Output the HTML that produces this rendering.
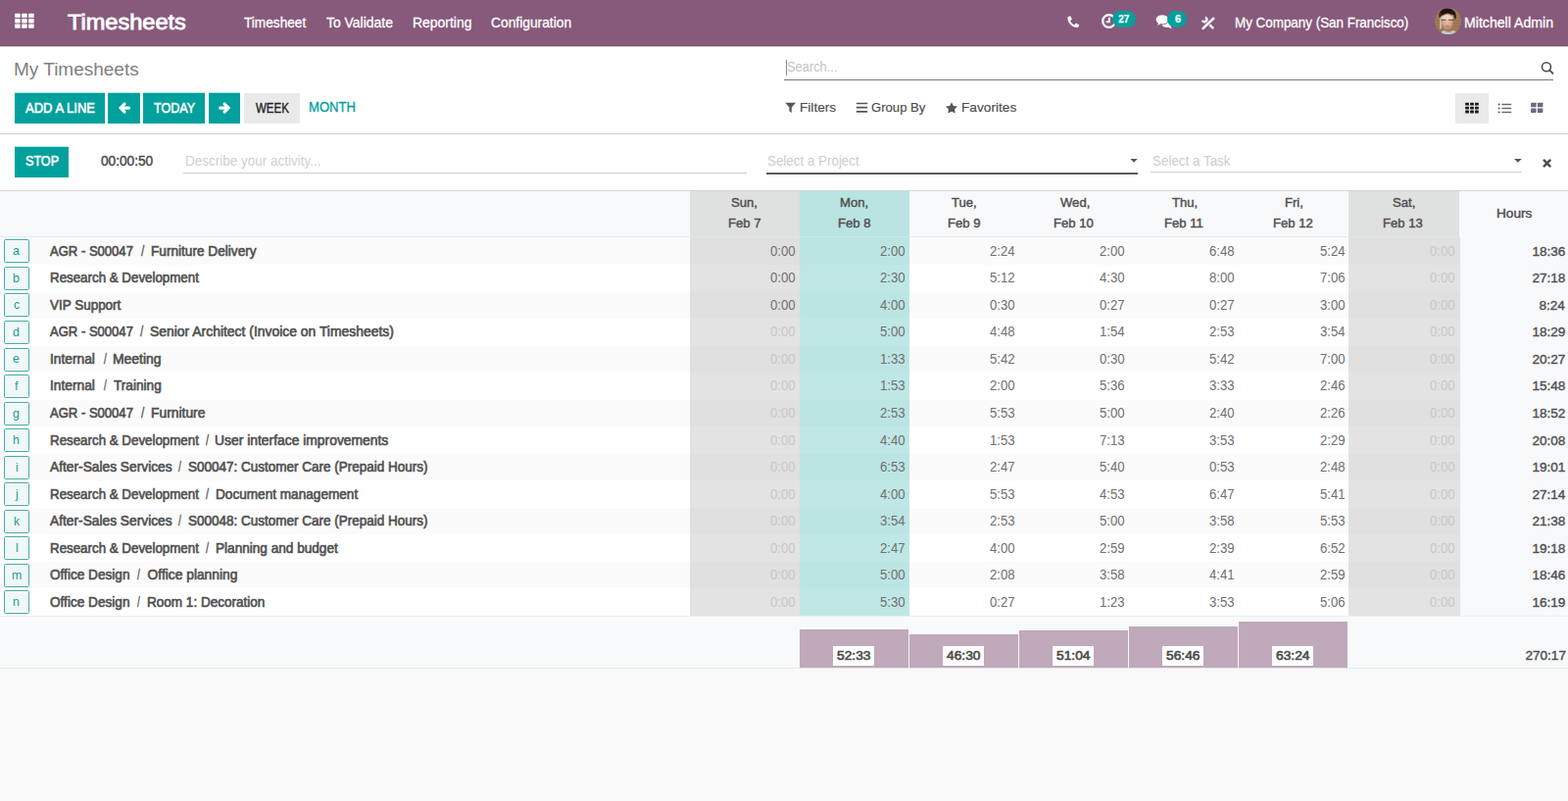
<!DOCTYPE html>
<html lang="en">
<head>
<meta charset="utf-8">
<title>Odoo - My Timesheets</title>
<style>
*{box-sizing:border-box;margin:0;padding:0}
html,body{width:1600px;height:817px;overflow:hidden;background:#f9f9f9}
body{font-family:"Liberation Sans",sans-serif;font-size:13px;color:#4c4c4c;position:relative}
#nav,#cp,#tm,#grid{position:absolute;left:0;width:1600px}
#nav div,#cp div,#tm div,#grid div,#nav svg,#cp svg,#tm svg,#grid svg,.t{position:absolute}
.t{white-space:pre;line-height:40px;height:40px;transform-origin:0 0}
#nav{top:0;height:47px;background:#875a7b;color:#fff;box-shadow:0 1px 0 #cbcbcb;z-index:2}
#nav:after{content:"";position:absolute;left:0;right:0;bottom:0;height:1px;background:#7a4670}
#cp{top:47px;height:90px;background:#fff}
#cp:after{content:"";position:absolute;left:0;right:0;bottom:0;height:1px;background:#cfcfcf}
#tm{top:137px;height:58px;background:#fff}
#tm:after{content:"";position:absolute;left:0;right:0;bottom:0;height:1px;background:#d6d6d6}
#grid{top:195px;height:487px;background:#fff}
.bp{background:#00a09d;box-shadow:0 -1px 0 rgba(0,160,157,.3)}
.w{color:#fff}
.kb{border:1px solid #45aaa7;border-radius:1.5px;background:#f1f8f8;box-shadow:inset 0 0 0 1px #fdfefe}

</style>
</head>
<body>
<header id="nav">
<svg style="left:15px;top:13px" width="21" height="17" viewBox="15 13 21 17"><g fill="#fff"><rect x="15.1" y="13.7" width="5.6" height="4.3" rx="0.7"/><rect x="15.1" y="19.1" width="5.6" height="4.3" rx="0.7"/><rect x="15.1" y="24.5" width="5.6" height="4.3" rx="0.7"/><rect x="22.1" y="13.7" width="5.6" height="4.3" rx="0.7"/><rect x="22.1" y="19.1" width="5.6" height="4.3" rx="0.7"/><rect x="22.1" y="24.5" width="5.6" height="4.3" rx="0.7"/><rect x="29.1" y="13.7" width="5.6" height="4.3" rx="0.7"/><rect x="29.1" y="19.1" width="5.6" height="4.3" rx="0.7"/><rect x="29.1" y="24.5" width="5.6" height="4.3" rx="0.7"/></g></svg>
<svg style="left:1089px;top:16px" width="13" height="13" viewBox="1089 16 13 13"><path transform="translate(1089.3 16.2)" fill="#fff" d="M2.2 .2L.5 1C.1 1.3 0 1.8 .1 2.3C.6 7.6 4.4 11.4 9.7 11.9C10.2 12 10.7 11.9 11 11.5L11.8 9.8C12 9.4 11.8 9 11.4 8.8L9 7.6C8.6 7.4 8.2 7.5 8 7.8L7.200 9.300C5.1 8.500 3.500 6.900 2.700 4.800L4.2 4C4.5 3.8 4.6 3.4 4.4 3L3.2 .6C3 .2 2.6 0 2.2 .2Z"/></svg>
<svg style="left:1123px;top:13px" width="18" height="18" viewBox="1123 13 18 18"><circle cx="1131.6" cy="21.5" r="6.400" fill="none" stroke="#fff" stroke-width="2.300"/><path d="M1131.900 17.700V22.300H1128.700" fill="none" stroke="#fff" stroke-width="1.900"/></svg>
<div style="left:1135px;top:11px;width:24px;height:17px;background:#00a09d;border-radius:9px"></div>
<svg style="left:1178px;top:14px" width="20" height="16" viewBox="1178 14 20 16"><path fill="#fff" d="M1190.6 20.800c3 0 5.300 1.600 5.300 3.600c0 1-.6 1.900-1.500 2.500c.3.800.9 1.500 1.700 2.100c-1.500 0-2.800-.5-3.700-1.300c-.6.100-1.200.2-1.800.2c-3 0-5.300-1.600-5.300-3.600s2.300-3.500 5.300-3.500z"/><path fill="#fff" stroke="#875a7b" stroke-width="1" d="M1186 14.900c3.800 0 6.800 2.200 6.800 5s-3 5-6.800 5c-.7 0-1.300-.1-1.900-.2c-1.100 1-2.600 1.600-4.300 1.700c.9-.8 1.500-1.700 1.700-2.700c-1.400-.9-2.300-2.200-2.300-3.800c0-2.800 3-5 6.800-5z"/></svg>
<div style="left:1191px;top:10.5px;width:20px;height:17.5px;background:#00a09d;border-radius:9px"></div>
<svg style="left:1225px;top:16px" width="16" height="15" viewBox="1225 16 16 15"><g fill="none" stroke="#fff" stroke-linecap="round"><path d="M1230.400 21.300L1237.500 28.300" stroke-width="2.500"/><path d="M1229.900 17.700A2.400 2.400 0 1 1 1226.900 20.700" stroke-width="2.200" stroke-linecap="butt"/><path d="M1238.200 18.800L1227.900 28.600" stroke="#875a7b" stroke-width="4" stroke-linecap="butt"/><path d="M1238 19L1228.300 28.200" stroke-width="2.600" stroke-linecap="square"/><path d="M1229.500 27.100L1227.200 29.300" stroke-width="1.600"/></g></svg>
<svg style="left:1464px;top:8px" width="28" height="28" viewBox="1464 8 28 28"><defs><clipPath id="avc"><circle cx="1477.6" cy="21.6" r="13.5"/></clipPath><radialGradient id="avf" cx="50%" cy="45%" r="55%"><stop offset="0" stop-color="#e6c3a9"/><stop offset=".7" stop-color="#d2a483"/><stop offset="1" stop-color="#b98a68" stop-opacity=".6"/></radialGradient><linearGradient id="avh" x1="0" y1="0" x2="0" y2="1"><stop offset="0" stop-color="#171010"/><stop offset=".75" stop-color="#2a1b18"/><stop offset="1" stop-color="#2a1b18" stop-opacity="0"/></linearGradient></defs><g clip-path="url(#avc)"><rect x="1460" y="4" width="36" height="36" fill="#a67e59"/><rect x="1460" y="11.5" width="36" height="1" fill="#80603f" opacity=".55"/><rect x="1460" y="14.5" width="36" height="1" fill="#80603f" opacity=".55"/><rect x="1460" y="17.5" width="36" height="1" fill="#80603f" opacity=".55"/><rect x="1460" y="20.5" width="36" height="1" fill="#80603f" opacity=".55"/><rect x="1460" y="23.5" width="36" height="1" fill="#80603f" opacity=".55"/><rect x="1460" y="26.5" width="36" height="1" fill="#80603f" opacity=".55"/><rect x="1460" y="29.5" width="36" height="1" fill="#80603f" opacity=".55"/><rect x="1460" y="32.5" width="36" height="1" fill="#80603f" opacity=".55"/><path d="M1468.300 16.500c-.1-5 3.400-8 8.600-8s8.800 2.900 9 8.500l-.9 4.500l-1.500-6.300l-6.300-1.700l-6.600 2.200l-1.100 3.500z" fill="url(#avh)"/><ellipse cx="1476.800" cy="22.400" rx="6" ry="8.400" fill="url(#avf)"/><rect x="1469.200" y="17.500" width="1.800" height="12" fill="#d9dadb" opacity=".7"/><path d="M1470.600 17.200q6-4.300 12.200 0l-.6 2.600h-11z" fill="#efdcd2" opacity=".85"/><path d="M1470.300 20.300h5.200M1478 20.300h5.200" stroke="#5a3a32" stroke-width="1.200" opacity=".7" fill="none"/><ellipse cx="1477" cy="27.200" rx="2.600" ry="1.400" fill="#c27c82" opacity=".8"/><path d="M1469 37c.8-4.300 3-5.600 5-6.200c2 2.600 6.500 2.600 8.500 0c2.500.8 4.500 2.400 5.300 6.200z" fill="#c5ced9" opacity=".9"/><path d="M1467.500 12.800l3.300.6l-1.800 3.400z" fill="#8a2a20" opacity=".8"/></g></svg>
<span class="t" style="left:68.5px;top:3.0px;font-size:21.5px;-webkit-text-stroke:0.8px;transform:scaleX(1.0955);">Timesheets</span>
<span class="t" style="left:248.75px;top:2.5px;font-size:15px;-webkit-text-stroke:0.3px;transform:scaleX(0.9107);">Timesheet</span>
<span class="t" style="left:333.1px;top:2.5px;font-size:15px;-webkit-text-stroke:0.3px;transform:scaleX(0.9288);">To Validate</span>
<span class="t" style="left:420.57px;top:2.5px;font-size:15px;-webkit-text-stroke:0.3px;transform:scaleX(0.9286);">Reporting</span>
<span class="t" style="left:500.58px;top:2.5px;font-size:15px;-webkit-text-stroke:0.3px;transform:scaleX(0.9205);">Configuration</span>
<span class="t" style="left:1259.71px;top:2.5px;font-size:15px;-webkit-text-stroke:0.3px;transform:scaleX(0.8934);">My Company (San Francisco)</span>
<span class="t" style="left:1494.06px;top:2.5px;font-size:15px;-webkit-text-stroke:0.3px;transform:scaleX(0.9421);">Mitchell Admin</span>
<span class="t" style="left:1141.3px;top:0.1px;font-size:10px;font-weight:bold;-webkit-text-stroke:0.25px;">27</span>
<span class="t" style="left:1198.6px;top:0.1px;font-size:10px;font-weight:bold;-webkit-text-stroke:0.25px;transform:scaleX(1.1);">6</span>
</header>
<section id="cp">
<div class="bp" style="left:15px;top:48px;width:92px;height:31px;"></div>
<div class="bp" style="left:110px;top:48px;width:33px;height:31px;"></div>
<svg style="left:119.7px;top:56.2px" width="15" height="14" viewBox="-1 -1 15 14"><path d="M6.1 2L2.1 6.1L6.1 10.200M3 6.1H10.600" fill="none" stroke="#fff" stroke-width="3.100" stroke-linejoin="miter" stroke-linecap="round"/></svg>
<div class="bp" style="left:146px;top:48px;width:63px;height:31px;"></div>
<div class="bp" style="left:213px;top:48px;width:32px;height:31px;"></div>
<svg style="left:222.1px;top:56.2px" width="15" height="14" viewBox="-1 -1 15 14"><path d="M6.1 2L2.1 6.1L6.1 10.200M3 6.1H10.600" transform="translate(12.2 0) scale(-1 1)" fill="none" stroke="#fff" stroke-width="3.100" stroke-linejoin="miter" stroke-linecap="round"/></svg>
<div style="left:249px;top:48px;width:56.5px;height:31px;background:#eaeaea;"></div>
<div style="left:800px;top:34px;width:785px;height:1px;background:#7a7a7a"></div>
<div style="left:802px;top:14px;width:1px;height:16px;background:#8c8c8c"></div>
<svg style="left:1571px;top:14px" width="16" height="16" viewBox="1571 61 16 16"><circle cx="1578" cy="68.200" r="4.500" fill="none" stroke="#4c4c4c" stroke-width="1.600"/><path d="M1581.300 71.600L1584.500 74.800" stroke="#4c4c4c" stroke-width="1.900" stroke-linecap="round"/></svg>
<svg style="left:800px;top:56px" width="13" height="13" viewBox="800 103 13 13"><path fill="#555" d="M801.200 104.700h10.800l-4.200 4.700v5.600l-2.400-1.800v-3.800z"/></svg>
<svg style="left:873px;top:56px" width="13" height="13" viewBox="873 103 13 13"><path stroke="#555" stroke-width="1.700" d="M873.800 105.500h11.400M873.800 109.700h11.400M873.800 113.800h11.400"/></svg>
<svg style="left:964px;top:56px" width="14" height="13" viewBox="964 103 14 13"><path fill="#555" d="M971 104.200l1.850 3.750l4.150.6l-3 2.920l.7 4.130l-3.700-1.950l-3.700 1.950l.7-4.130l-3-2.920l4.150-.6z"/></svg>
<div style="left:1485px;top:48px;width:34px;height:31px;background:#eaeaea"></div>
<svg style="left:1495px;top:57px" width="15" height="12" viewBox="1495 104 15 12"><g fill="#1b1b1b"><rect x="1495.2" y="104.8" width="3.800" height="2.800" rx=".4"/><rect x="1495.2" y="108.7" width="3.800" height="2.800" rx=".4"/><rect x="1495.2" y="112.6" width="3.800" height="2.800" rx=".4"/><rect x="1500.1" y="104.8" width="3.800" height="2.800" rx=".4"/><rect x="1500.1" y="108.7" width="3.800" height="2.800" rx=".4"/><rect x="1500.1" y="112.6" width="3.800" height="2.800" rx=".4"/><rect x="1505" y="104.8" width="3.800" height="2.800" rx=".4"/><rect x="1505" y="108.7" width="3.800" height="2.800" rx=".4"/><rect x="1505" y="112.6" width="3.800" height="2.800" rx=".4"/></g></svg>
<svg style="left:1528px;top:57px" width="15" height="12" viewBox="1528 104 15 12"><g fill="#5f6775"><circle cx="1529.600" cy="106.5" r="1.100"/><rect x="1532.400" y="105.8" width="9.800" height="1.400"/><circle cx="1529.600" cy="110.5" r="1.100"/><rect x="1532.400" y="109.8" width="9.800" height="1.400"/><circle cx="1529.600" cy="114.5" r="1.100"/><rect x="1532.400" y="113.8" width="9.800" height="1.400"/></g></svg>
<svg style="left:1561px;top:57px" width="14" height="12" viewBox="1561 104 14 12"><g fill="#666e7c"><rect x="1562.1" y="104.7" width="5.500" height="4.600" rx=".5"/><rect x="1562.1" y="110.5" width="5.500" height="4.600" rx=".5"/><rect x="1568.9" y="104.7" width="5.500" height="4.600" rx=".5"/><rect x="1568.9" y="110.5" width="5.500" height="4.600" rx=".5"/></g></svg>
<span class="t" style="left:14.12px;top:3.9px;font-size:19.2px;color:#808080;transform:scaleX(0.9898);">My Timesheets</span>
<span class="t" style="left:25.75px;top:42.6px;font-size:14px;color:#fff;-webkit-text-stroke:0.55px;transform:scaleX(0.9309);">ADD A LINE</span>
<span class="t" style="left:157.0px;top:42.6px;font-size:14px;color:#fff;-webkit-text-stroke:0.55px;transform:scaleX(0.8989);">TODAY</span>
<span class="t" style="left:260.6px;top:42.6px;font-size:14px;color:#212529;-webkit-text-stroke:0.4px;transform:scaleX(0.822);">WEEK</span>
<span class="t" style="left:315.17px;top:42.2px;font-size:14px;color:#00a09d;-webkit-text-stroke:0.3px;transform:scaleX(0.934);">MONTH</span>
<span class="t" style="left:802.98px;top:0.7px;font-size:14px;color:#c4c4c4;transform:scaleX(0.9194);">Search...</span>
<span class="t" style="left:815.6px;top:43.3px;font-size:13.6px;-webkit-text-stroke:0.15px;transform:scaleX(1.0028);">Filters</span>
<span class="t" style="left:889.24px;top:43.3px;font-size:13.6px;-webkit-text-stroke:0.15px;transform:scaleX(0.9643);">Group By</span>
<span class="t" style="left:981.49px;top:43.3px;font-size:13.6px;-webkit-text-stroke:0.15px;transform:scaleX(1.0056);">Favorites</span>
</section>
<section id="tm">
<div class="bp" style="left:15px;top:13px;width:55px;height:31px;"></div>
<div style="left:187px;top:39px;width:575.3px;height:1px;background:#ccc"></div>
<div style="left:782px;top:39px;width:379px;height:2px;background:#5c5c5c"></div>
<svg style="left:1153px;top:24px" width="9" height="6" viewBox="1153 161 9 6"><path fill="#555" d="M1153.400 162h7.400l-3.700 3.800z"/></svg>
<div style="left:1173.5px;top:38px;width:379.5px;height:1px;background:#d2d2d2"></div>
<svg style="left:1545px;top:24px" width="9" height="6" viewBox="1545 161 9 6"><path fill="#555" d="M1545 162h7.800l-3.900 3.800z"/></svg>
<svg style="left:1573px;top:24px" width="11" height="11" viewBox="1573 161 11 11"><path d="M1575 162.900l7.200 7.200M1582.200 162.900l-7.200 7.200" stroke="#4c4c4c" stroke-width="2.500"/></svg>
<span class="t" style="left:25.6px;top:7.4px;font-size:14px;color:#fff;-webkit-text-stroke:0.55px;transform:scaleX(0.8987);">STOP</span>
<span class="t" style="left:102.5px;top:7.2px;font-size:14px;-webkit-text-stroke:0.45px;transform:scaleX(0.9759);">00:00:50</span>
<span class="t" style="left:189.39px;top:7.2px;font-size:14px;color:#d0d0d0;transform:scaleX(0.9644);">Describe your activity...</span>
<span class="t" style="left:783.39px;top:7.0px;font-size:14px;color:#cdcdcd;transform:scaleX(0.9557);">Select a Project</span>
<span class="t" style="left:1175.89px;top:7.0px;font-size:14px;color:#cdcdcd;transform:scaleX(0.9579);">Select a Task</span>
</section>
<main id="grid">
<div style="left:0px;top:0px;width:1600px;height:46px;background:#f8f9fa"></div>
<div style="left:0px;top:47px;width:1600px;height:28px;background:#fbfbfb"></div>
<div style="left:0px;top:75px;width:1600px;height:27px;background:#fff"></div>
<div style="left:0px;top:102px;width:1600px;height:28px;background:#fbfbfb"></div>
<div style="left:0px;top:130px;width:1600px;height:28px;background:#fff"></div>
<div style="left:0px;top:158px;width:1600px;height:27px;background:#fbfbfb"></div>
<div style="left:0px;top:185px;width:1600px;height:28px;background:#fff"></div>
<div style="left:0px;top:213px;width:1600px;height:27px;background:#fbfbfb"></div>
<div style="left:0px;top:240px;width:1600px;height:28px;background:#fff"></div>
<div style="left:0px;top:268px;width:1600px;height:27px;background:#fbfbfb"></div>
<div style="left:0px;top:295px;width:1600px;height:28px;background:#fff"></div>
<div style="left:0px;top:323px;width:1600px;height:27px;background:#fbfbfb"></div>
<div style="left:0px;top:350px;width:1600px;height:28px;background:#fff"></div>
<div style="left:0px;top:378px;width:1600px;height:27px;background:#fbfbfb"></div>
<div style="left:0px;top:405px;width:1600px;height:28px;background:#fff"></div>
<div style="left:0px;top:46px;width:1600px;height:1px;background:#e8ebee"></div>
<div style="left:704px;top:0px;width:112px;height:47px;background:#dfe0e0;border-bottom:1px solid #e4e5e5"></div>
<div style="left:816px;top:0px;width:112px;height:47px;background:#bae4e2;border-bottom:1px solid #c3e8e6"></div>
<div style="left:1376px;top:0px;width:113px;height:47px;background:#dfe0e0;border-bottom:1px solid #e4e5e5"></div>
<div style="left:704px;top:47px;width:112px;height:28px;background:#e0e0e0"></div>
<div style="left:816px;top:47px;width:112px;height:28px;background:#bbe5e3"></div>
<div style="left:1376px;top:47px;width:114px;height:28px;background:#e0e0e0"></div>
<div style="left:704px;top:75px;width:112px;height:27px;background:#e3e3e3"></div>
<div style="left:816px;top:75px;width:112px;height:27px;background:#bee7e5"></div>
<div style="left:1376px;top:75px;width:114px;height:27px;background:#e3e3e3"></div>
<div style="left:704px;top:102px;width:112px;height:28px;background:#e0e0e0"></div>
<div style="left:816px;top:102px;width:112px;height:28px;background:#bbe5e3"></div>
<div style="left:1376px;top:102px;width:114px;height:28px;background:#e0e0e0"></div>
<div style="left:704px;top:130px;width:112px;height:28px;background:#e3e3e3"></div>
<div style="left:816px;top:130px;width:112px;height:28px;background:#bee7e5"></div>
<div style="left:1376px;top:130px;width:114px;height:28px;background:#e3e3e3"></div>
<div style="left:704px;top:158px;width:112px;height:27px;background:#e0e0e0"></div>
<div style="left:816px;top:158px;width:112px;height:27px;background:#bbe5e3"></div>
<div style="left:1376px;top:158px;width:114px;height:27px;background:#e0e0e0"></div>
<div style="left:704px;top:185px;width:112px;height:28px;background:#e3e3e3"></div>
<div style="left:816px;top:185px;width:112px;height:28px;background:#bee7e5"></div>
<div style="left:1376px;top:185px;width:114px;height:28px;background:#e3e3e3"></div>
<div style="left:704px;top:213px;width:112px;height:27px;background:#e0e0e0"></div>
<div style="left:816px;top:213px;width:112px;height:27px;background:#bbe5e3"></div>
<div style="left:1376px;top:213px;width:114px;height:27px;background:#e0e0e0"></div>
<div style="left:704px;top:240px;width:112px;height:28px;background:#e3e3e3"></div>
<div style="left:816px;top:240px;width:112px;height:28px;background:#bee7e5"></div>
<div style="left:1376px;top:240px;width:114px;height:28px;background:#e3e3e3"></div>
<div style="left:704px;top:268px;width:112px;height:27px;background:#e0e0e0"></div>
<div style="left:816px;top:268px;width:112px;height:27px;background:#bbe5e3"></div>
<div style="left:1376px;top:268px;width:114px;height:27px;background:#e0e0e0"></div>
<div style="left:704px;top:295px;width:112px;height:28px;background:#e3e3e3"></div>
<div style="left:816px;top:295px;width:112px;height:28px;background:#bee7e5"></div>
<div style="left:1376px;top:295px;width:114px;height:28px;background:#e3e3e3"></div>
<div style="left:704px;top:323px;width:112px;height:27px;background:#e0e0e0"></div>
<div style="left:816px;top:323px;width:112px;height:27px;background:#bbe5e3"></div>
<div style="left:1376px;top:323px;width:114px;height:27px;background:#e0e0e0"></div>
<div style="left:704px;top:350px;width:112px;height:28px;background:#e3e3e3"></div>
<div style="left:816px;top:350px;width:112px;height:28px;background:#bee7e5"></div>
<div style="left:1376px;top:350px;width:114px;height:28px;background:#e3e3e3"></div>
<div style="left:704px;top:378px;width:112px;height:27px;background:#e0e0e0"></div>
<div style="left:816px;top:378px;width:112px;height:27px;background:#bbe5e3"></div>
<div style="left:1376px;top:378px;width:114px;height:27px;background:#e0e0e0"></div>
<div style="left:704px;top:405px;width:112px;height:28px;background:#e3e3e3"></div>
<div style="left:816px;top:405px;width:112px;height:28px;background:#bee7e5"></div>
<div style="left:1376px;top:405px;width:114px;height:28px;background:#e3e3e3"></div>
<div style="left:1490px;top:46px;width:110px;height:387px;background:#f8f9fa"></div>
<div style="left:0px;top:433px;width:1600px;height:1px;background:#eceef1"></div>
<div style="left:0px;top:434px;width:1600px;height:52px;background:#f8f9fa"></div>
<div style="left:0px;top:486px;width:1600px;height:1px;background:#e4e6e9"></div>
<div class="kb" style="left:4px;top:49px;width:26px;height:24px;"></div>
<div class="kb" style="left:4px;top:77px;width:26px;height:24px;"></div>
<div class="kb" style="left:4px;top:104px;width:26px;height:24px;"></div>
<div class="kb" style="left:4px;top:132px;width:26px;height:24px;"></div>
<div class="kb" style="left:4px;top:160px;width:26px;height:24px;"></div>
<div class="kb" style="left:4px;top:187px;width:26px;height:24px;"></div>
<div class="kb" style="left:4px;top:215px;width:26px;height:24px;"></div>
<div class="kb" style="left:4px;top:242px;width:26px;height:24px;"></div>
<div class="kb" style="left:4px;top:270px;width:26px;height:24px;"></div>
<div class="kb" style="left:4px;top:297px;width:26px;height:24px;"></div>
<div class="kb" style="left:4px;top:325px;width:26px;height:24px;"></div>
<div class="kb" style="left:4px;top:352px;width:26px;height:24px;"></div>
<div class="kb" style="left:4px;top:380px;width:26px;height:24px;"></div>
<div class="kb" style="left:4px;top:407px;width:26px;height:24px;"></div>
<div style="left:816px;top:447px;width:111px;height:39px;background:#bfa9ba"></div>
<div style="left:850.0px;top:464px;width:42px;height:20px;background:#fff"></div>
<div style="left:928px;top:452px;width:111px;height:34px;background:#bfa9ba"></div>
<div style="left:962.0px;top:464px;width:42px;height:20px;background:#fff"></div>
<div style="left:1040px;top:448px;width:111px;height:38px;background:#bfa9ba"></div>
<div style="left:1074.0px;top:464px;width:42px;height:20px;background:#fff"></div>
<div style="left:1152px;top:444px;width:111px;height:42px;background:#bfa9ba"></div>
<div style="left:1186.0px;top:464px;width:42px;height:20px;background:#fff"></div>
<div style="left:1264px;top:439px;width:111px;height:47px;background:#bfa9ba"></div>
<div style="left:1298.0px;top:464px;width:42px;height:20px;background:#fff"></div>
<span class="t" style="left:746.18px;top:-7.8px;font-size:13.5px;color:#505050;-webkit-text-stroke:0.45px;transform:scaleX(0.97);">Sun,</span>
<span class="t" style="left:742.58px;top:12.7px;font-size:13.5px;color:#505050;-webkit-text-stroke:0.45px;transform:scaleX(0.97);">Feb 7</span>
<span class="t" style="left:857.33px;top:-7.8px;font-size:13.5px;color:#505050;-webkit-text-stroke:0.45px;transform:scaleX(0.97);">Mon,</span>
<span class="t" style="left:854.71px;top:12.7px;font-size:13.5px;color:#505050;-webkit-text-stroke:0.45px;transform:scaleX(0.97);">Feb 8</span>
<span class="t" style="left:971.39px;top:-7.8px;font-size:13.5px;color:#505050;-webkit-text-stroke:0.45px;transform:scaleX(0.97);">Tue,</span>
<span class="t" style="left:966.83px;top:12.7px;font-size:13.5px;color:#505050;-webkit-text-stroke:0.45px;transform:scaleX(0.97);">Feb 9</span>
<span class="t" style="left:1081.57px;top:-7.8px;font-size:13.5px;color:#505050;-webkit-text-stroke:0.45px;transform:scaleX(0.97);">Wed,</span>
<span class="t" style="left:1075.07px;top:12.7px;font-size:13.5px;color:#505050;-webkit-text-stroke:0.45px;transform:scaleX(0.97);">Feb 10</span>
<span class="t" style="left:1195.63px;top:-7.8px;font-size:13.5px;color:#505050;-webkit-text-stroke:0.45px;transform:scaleX(0.97);">Thu,</span>
<span class="t" style="left:1187.67px;top:12.7px;font-size:13.5px;color:#505050;-webkit-text-stroke:0.45px;transform:scaleX(0.97);">Feb 11</span>
<span class="t" style="left:1310.66px;top:-7.8px;font-size:13.5px;color:#505050;-webkit-text-stroke:0.45px;transform:scaleX(0.97);">Fri,</span>
<span class="t" style="left:1299.3px;top:12.7px;font-size:13.5px;color:#505050;-webkit-text-stroke:0.45px;transform:scaleX(0.97);">Feb 12</span>
<span class="t" style="left:1420.84px;top:-7.8px;font-size:13.5px;color:#505050;-webkit-text-stroke:0.45px;transform:scaleX(0.97);">Sat,</span>
<span class="t" style="left:1411.43px;top:12.7px;font-size:13.5px;color:#505050;-webkit-text-stroke:0.45px;transform:scaleX(0.97);">Feb 13</span>
<span class="t" style="left:1526.79px;top:2.8px;font-size:13.5px;color:#505050;-webkit-text-stroke:0.45px;transform:scaleX(1.0114);">Hours</span>
<span class="t" style="left:13.3px;top:41.2px;font-size:13px;color:#1a9a97;transform:scaleX(0.95);">a</span>
<span class="t" style="left:50.9px;top:41.7px;font-size:13.8px;color:#505050;-webkit-text-stroke:0.62px;transform:scaleX(0.9461);">AGR - S00047</span>
<span class="t" style="left:144.35px;top:41.7px;font-size:13.8px;color:#555;-webkit-text-stroke:0.3px;transform:scaleX(0.8625);">/</span>
<span class="t" style="left:153.86px;top:41.7px;font-size:13.8px;color:#505050;-webkit-text-stroke:0.62px;transform:scaleX(0.988);">Furniture Delivery</span>
<span class="t" style="left:786.22px;top:40.7px;font-size:14px;color:#707070;transform:scaleX(0.94);">0:00</span>
<span class="t" style="left:898.22px;top:40.7px;font-size:14px;color:#707070;transform:scaleX(0.94);">2:00</span>
<span class="t" style="left:1010.22px;top:40.7px;font-size:14px;color:#707070;transform:scaleX(0.94);">2:24</span>
<span class="t" style="left:1122.22px;top:40.7px;font-size:14px;color:#707070;transform:scaleX(0.94);">2:00</span>
<span class="t" style="left:1234.22px;top:40.7px;font-size:14px;color:#707070;transform:scaleX(0.94);">6:48</span>
<span class="t" style="left:1346.62px;top:40.7px;font-size:14px;color:#707070;transform:scaleX(0.94);">5:24</span>
<span class="t" style="left:1459.12px;top:40.7px;font-size:14px;color:#c8c8c8;transform:scaleX(0.94);">0:00</span>
<span class="t" style="left:1563.4px;top:41.7px;font-size:13.6px;color:#505050;-webkit-text-stroke:0.4px;">18:36</span>
<span class="t" style="left:13.3px;top:68.75px;font-size:13px;color:#1a9a97;transform:scaleX(0.95);">b</span>
<span class="t" style="left:50.9px;top:69.25px;font-size:13.8px;color:#505050;-webkit-text-stroke:0.62px;transform:scaleX(0.9661);">Research &amp; Development</span>
<span class="t" style="left:786.22px;top:68.25px;font-size:14px;color:#707070;transform:scaleX(0.94);">0:00</span>
<span class="t" style="left:898.22px;top:68.25px;font-size:14px;color:#707070;transform:scaleX(0.94);">2:30</span>
<span class="t" style="left:1010.22px;top:68.25px;font-size:14px;color:#707070;transform:scaleX(0.94);">5:12</span>
<span class="t" style="left:1122.22px;top:68.25px;font-size:14px;color:#707070;transform:scaleX(0.94);">4:30</span>
<span class="t" style="left:1234.22px;top:68.25px;font-size:14px;color:#707070;transform:scaleX(0.94);">8:00</span>
<span class="t" style="left:1346.62px;top:68.25px;font-size:14px;color:#707070;transform:scaleX(0.94);">7:06</span>
<span class="t" style="left:1459.12px;top:68.25px;font-size:14px;color:#c8c8c8;transform:scaleX(0.94);">0:00</span>
<span class="t" style="left:1563.4px;top:69.25px;font-size:13.6px;color:#505050;-webkit-text-stroke:0.4px;">27:18</span>
<span class="t" style="left:13.78px;top:96.3px;font-size:13px;color:#1a9a97;transform:scaleX(0.95);">c</span>
<span class="t" style="left:50.9px;top:96.8px;font-size:13.8px;color:#505050;-webkit-text-stroke:0.62px;transform:scaleX(0.9753);">VIP Support</span>
<span class="t" style="left:786.22px;top:95.8px;font-size:14px;color:#707070;transform:scaleX(0.94);">0:00</span>
<span class="t" style="left:898.22px;top:95.8px;font-size:14px;color:#707070;transform:scaleX(0.94);">4:00</span>
<span class="t" style="left:1010.22px;top:95.8px;font-size:14px;color:#707070;transform:scaleX(0.94);">0:30</span>
<span class="t" style="left:1122.22px;top:95.8px;font-size:14px;color:#707070;transform:scaleX(0.94);">0:27</span>
<span class="t" style="left:1234.22px;top:95.8px;font-size:14px;color:#707070;transform:scaleX(0.94);">0:27</span>
<span class="t" style="left:1346.62px;top:95.8px;font-size:14px;color:#707070;transform:scaleX(0.94);">3:00</span>
<span class="t" style="left:1459.12px;top:95.8px;font-size:14px;color:#c8c8c8;transform:scaleX(0.94);">0:00</span>
<span class="t" style="left:1570.4px;top:96.8px;font-size:13.6px;color:#505050;-webkit-text-stroke:0.4px;">8:24</span>
<span class="t" style="left:13.3px;top:123.85px;font-size:13px;color:#1a9a97;transform:scaleX(0.95);">d</span>
<span class="t" style="left:50.9px;top:124.35px;font-size:13.8px;color:#505050;-webkit-text-stroke:0.62px;transform:scaleX(0.9461);">AGR - S00047</span>
<span class="t" style="left:143.1px;top:124.35px;font-size:13.8px;color:#555;-webkit-text-stroke:0.3px;transform:scaleX(0.8625);">/</span>
<span class="t" style="left:153.1px;top:124.35px;font-size:13.8px;color:#505050;-webkit-text-stroke:0.62px;transform:scaleX(1.0079);">Senior Architect (Invoice on Timesheets)</span>
<span class="t" style="left:786.22px;top:123.35px;font-size:14px;color:#c8c8c8;transform:scaleX(0.94);">0:00</span>
<span class="t" style="left:898.22px;top:123.35px;font-size:14px;color:#707070;transform:scaleX(0.94);">5:00</span>
<span class="t" style="left:1010.22px;top:123.35px;font-size:14px;color:#707070;transform:scaleX(0.94);">4:48</span>
<span class="t" style="left:1122.22px;top:123.35px;font-size:14px;color:#707070;transform:scaleX(0.94);">1:54</span>
<span class="t" style="left:1234.22px;top:123.35px;font-size:14px;color:#707070;transform:scaleX(0.94);">2:53</span>
<span class="t" style="left:1346.62px;top:123.35px;font-size:14px;color:#707070;transform:scaleX(0.94);">3:54</span>
<span class="t" style="left:1459.12px;top:123.35px;font-size:14px;color:#c8c8c8;transform:scaleX(0.94);">0:00</span>
<span class="t" style="left:1563.4px;top:124.35px;font-size:13.6px;color:#505050;-webkit-text-stroke:0.4px;">18:29</span>
<span class="t" style="left:13.3px;top:151.4px;font-size:13px;color:#1a9a97;transform:scaleX(0.95);">e</span>
<span class="t" style="left:50.9px;top:151.9px;font-size:13.8px;color:#505050;-webkit-text-stroke:0.62px;transform:scaleX(0.9978);">Internal</span>
<span class="t" style="left:105.6px;top:151.9px;font-size:13.8px;color:#555;-webkit-text-stroke:0.3px;transform:scaleX(0.7375);">/</span>
<span class="t" style="left:115.34px;top:151.9px;font-size:13.8px;color:#505050;-webkit-text-stroke:0.62px;transform:scaleX(1.0094);">Meeting</span>
<span class="t" style="left:786.22px;top:150.9px;font-size:14px;color:#c8c8c8;transform:scaleX(0.94);">0:00</span>
<span class="t" style="left:898.22px;top:150.9px;font-size:14px;color:#707070;transform:scaleX(0.94);">1:33</span>
<span class="t" style="left:1010.22px;top:150.9px;font-size:14px;color:#707070;transform:scaleX(0.94);">5:42</span>
<span class="t" style="left:1122.22px;top:150.9px;font-size:14px;color:#707070;transform:scaleX(0.94);">0:30</span>
<span class="t" style="left:1234.22px;top:150.9px;font-size:14px;color:#707070;transform:scaleX(0.94);">5:42</span>
<span class="t" style="left:1346.62px;top:150.9px;font-size:14px;color:#707070;transform:scaleX(0.94);">7:00</span>
<span class="t" style="left:1459.12px;top:150.9px;font-size:14px;color:#c8c8c8;transform:scaleX(0.94);">0:00</span>
<span class="t" style="left:1563.4px;top:151.9px;font-size:13.6px;color:#505050;-webkit-text-stroke:0.4px;">20:27</span>
<span class="t" style="left:15.2px;top:178.95px;font-size:13px;color:#1a9a97;transform:scaleX(0.95);">f</span>
<span class="t" style="left:50.9px;top:179.45px;font-size:13.8px;color:#505050;-webkit-text-stroke:0.62px;transform:scaleX(0.9978);">Internal</span>
<span class="t" style="left:105.6px;top:179.45px;font-size:13.8px;color:#555;-webkit-text-stroke:0.3px;transform:scaleX(0.7375);">/</span>
<span class="t" style="left:116.35px;top:179.45px;font-size:13.8px;color:#505050;-webkit-text-stroke:0.62px;transform:scaleX(0.9888);">Training</span>
<span class="t" style="left:786.22px;top:178.45px;font-size:14px;color:#c8c8c8;transform:scaleX(0.94);">0:00</span>
<span class="t" style="left:898.22px;top:178.45px;font-size:14px;color:#707070;transform:scaleX(0.94);">1:53</span>
<span class="t" style="left:1010.22px;top:178.45px;font-size:14px;color:#707070;transform:scaleX(0.94);">2:00</span>
<span class="t" style="left:1122.22px;top:178.45px;font-size:14px;color:#707070;transform:scaleX(0.94);">5:36</span>
<span class="t" style="left:1234.22px;top:178.45px;font-size:14px;color:#707070;transform:scaleX(0.94);">3:33</span>
<span class="t" style="left:1346.62px;top:178.45px;font-size:14px;color:#707070;transform:scaleX(0.94);">2:46</span>
<span class="t" style="left:1459.12px;top:178.45px;font-size:14px;color:#c8c8c8;transform:scaleX(0.94);">0:00</span>
<span class="t" style="left:1563.4px;top:179.45px;font-size:13.6px;color:#505050;-webkit-text-stroke:0.4px;">15:48</span>
<span class="t" style="left:13.3px;top:206.5px;font-size:13px;color:#1a9a97;transform:scaleX(0.95);">g</span>
<span class="t" style="left:50.9px;top:207.0px;font-size:13.8px;color:#505050;-webkit-text-stroke:0.62px;transform:scaleX(0.9461);">AGR - S00047</span>
<span class="t" style="left:144.35px;top:207.0px;font-size:13.8px;color:#555;-webkit-text-stroke:0.3px;transform:scaleX(0.8625);">/</span>
<span class="t" style="left:154.1px;top:207.0px;font-size:13.8px;color:#505050;-webkit-text-stroke:0.62px;transform:scaleX(1.0037);">Furniture</span>
<span class="t" style="left:786.22px;top:206.0px;font-size:14px;color:#c8c8c8;transform:scaleX(0.94);">0:00</span>
<span class="t" style="left:898.22px;top:206.0px;font-size:14px;color:#707070;transform:scaleX(0.94);">2:53</span>
<span class="t" style="left:1010.22px;top:206.0px;font-size:14px;color:#707070;transform:scaleX(0.94);">5:53</span>
<span class="t" style="left:1122.22px;top:206.0px;font-size:14px;color:#707070;transform:scaleX(0.94);">5:00</span>
<span class="t" style="left:1234.22px;top:206.0px;font-size:14px;color:#707070;transform:scaleX(0.94);">2:40</span>
<span class="t" style="left:1346.62px;top:206.0px;font-size:14px;color:#707070;transform:scaleX(0.94);">2:26</span>
<span class="t" style="left:1459.12px;top:206.0px;font-size:14px;color:#c8c8c8;transform:scaleX(0.94);">0:00</span>
<span class="t" style="left:1563.4px;top:207.0px;font-size:13.6px;color:#505050;-webkit-text-stroke:0.4px;">18:52</span>
<span class="t" style="left:13.3px;top:234.05px;font-size:13px;color:#1a9a97;transform:scaleX(0.95);">h</span>
<span class="t" style="left:50.9px;top:234.55px;font-size:13.8px;color:#505050;-webkit-text-stroke:0.62px;transform:scaleX(0.9661);">Research &amp; Development</span>
<span class="t" style="left:209.85px;top:234.55px;font-size:13.8px;color:#555;-webkit-text-stroke:0.3px;transform:scaleX(0.8);">/</span>
<span class="t" style="left:219.09px;top:234.55px;font-size:13.8px;color:#505050;-webkit-text-stroke:0.62px;transform:scaleX(1.0054);">User interface improvements</span>
<span class="t" style="left:786.22px;top:233.55px;font-size:14px;color:#c8c8c8;transform:scaleX(0.94);">0:00</span>
<span class="t" style="left:898.22px;top:233.55px;font-size:14px;color:#707070;transform:scaleX(0.94);">4:40</span>
<span class="t" style="left:1010.22px;top:233.55px;font-size:14px;color:#707070;transform:scaleX(0.94);">1:53</span>
<span class="t" style="left:1122.22px;top:233.55px;font-size:14px;color:#707070;transform:scaleX(0.94);">7:13</span>
<span class="t" style="left:1234.22px;top:233.55px;font-size:14px;color:#707070;transform:scaleX(0.94);">3:53</span>
<span class="t" style="left:1346.62px;top:233.55px;font-size:14px;color:#707070;transform:scaleX(0.94);">2:29</span>
<span class="t" style="left:1459.12px;top:233.55px;font-size:14px;color:#c8c8c8;transform:scaleX(0.94);">0:00</span>
<span class="t" style="left:1563.4px;top:234.55px;font-size:13.6px;color:#505050;-webkit-text-stroke:0.4px;">20:08</span>
<span class="t" style="left:15.68px;top:261.6px;font-size:13px;color:#1a9a97;transform:scaleX(0.95);">i</span>
<span class="t" style="left:50.9px;top:262.1px;font-size:13.8px;color:#505050;-webkit-text-stroke:0.62px;transform:scaleX(0.9972);">After-Sales Services</span>
<span class="t" style="left:181.85px;top:262.1px;font-size:13.8px;color:#555;-webkit-text-stroke:0.3px;transform:scaleX(0.7375);">/</span>
<span class="t" style="left:192.35px;top:262.1px;font-size:13.8px;color:#505050;-webkit-text-stroke:0.62px;transform:scaleX(0.9778);">S00047: Customer Care (Prepaid Hours)</span>
<span class="t" style="left:786.22px;top:261.1px;font-size:14px;color:#c8c8c8;transform:scaleX(0.94);">0:00</span>
<span class="t" style="left:898.22px;top:261.1px;font-size:14px;color:#707070;transform:scaleX(0.94);">6:53</span>
<span class="t" style="left:1010.22px;top:261.1px;font-size:14px;color:#707070;transform:scaleX(0.94);">2:47</span>
<span class="t" style="left:1122.22px;top:261.1px;font-size:14px;color:#707070;transform:scaleX(0.94);">5:40</span>
<span class="t" style="left:1234.22px;top:261.1px;font-size:14px;color:#707070;transform:scaleX(0.94);">0:53</span>
<span class="t" style="left:1346.62px;top:261.1px;font-size:14px;color:#707070;transform:scaleX(0.94);">2:48</span>
<span class="t" style="left:1459.12px;top:261.1px;font-size:14px;color:#c8c8c8;transform:scaleX(0.94);">0:00</span>
<span class="t" style="left:1563.4px;top:262.1px;font-size:13.6px;color:#505050;-webkit-text-stroke:0.4px;">19:01</span>
<span class="t" style="left:16.15px;top:289.15px;font-size:13px;color:#1a9a97;transform:scaleX(0.95);">j</span>
<span class="t" style="left:50.9px;top:289.65px;font-size:13.8px;color:#505050;-webkit-text-stroke:0.62px;transform:scaleX(0.9661);">Research &amp; Development</span>
<span class="t" style="left:209.85px;top:289.65px;font-size:13.8px;color:#555;-webkit-text-stroke:0.3px;transform:scaleX(0.8);">/</span>
<span class="t" style="left:219.61px;top:289.65px;font-size:13.8px;color:#505050;-webkit-text-stroke:0.62px;transform:scaleX(0.9861);">Document management</span>
<span class="t" style="left:786.22px;top:288.65px;font-size:14px;color:#c8c8c8;transform:scaleX(0.94);">0:00</span>
<span class="t" style="left:898.22px;top:288.65px;font-size:14px;color:#707070;transform:scaleX(0.94);">4:00</span>
<span class="t" style="left:1010.22px;top:288.65px;font-size:14px;color:#707070;transform:scaleX(0.94);">5:53</span>
<span class="t" style="left:1122.22px;top:288.65px;font-size:14px;color:#707070;transform:scaleX(0.94);">4:53</span>
<span class="t" style="left:1234.22px;top:288.65px;font-size:14px;color:#707070;transform:scaleX(0.94);">6:47</span>
<span class="t" style="left:1346.62px;top:288.65px;font-size:14px;color:#707070;transform:scaleX(0.94);">5:41</span>
<span class="t" style="left:1459.12px;top:288.65px;font-size:14px;color:#c8c8c8;transform:scaleX(0.94);">0:00</span>
<span class="t" style="left:1563.4px;top:289.65px;font-size:13.6px;color:#505050;-webkit-text-stroke:0.4px;">27:14</span>
<span class="t" style="left:13.78px;top:316.7px;font-size:13px;color:#1a9a97;transform:scaleX(0.95);">k</span>
<span class="t" style="left:50.9px;top:317.2px;font-size:13.8px;color:#505050;-webkit-text-stroke:0.62px;transform:scaleX(0.9972);">After-Sales Services</span>
<span class="t" style="left:181.85px;top:317.2px;font-size:13.8px;color:#555;-webkit-text-stroke:0.3px;transform:scaleX(0.7375);">/</span>
<span class="t" style="left:192.35px;top:317.2px;font-size:13.8px;color:#505050;-webkit-text-stroke:0.62px;transform:scaleX(0.9778);">S00048: Customer Care (Prepaid Hours)</span>
<span class="t" style="left:786.22px;top:316.2px;font-size:14px;color:#c8c8c8;transform:scaleX(0.94);">0:00</span>
<span class="t" style="left:898.22px;top:316.2px;font-size:14px;color:#707070;transform:scaleX(0.94);">3:54</span>
<span class="t" style="left:1010.22px;top:316.2px;font-size:14px;color:#707070;transform:scaleX(0.94);">2:53</span>
<span class="t" style="left:1122.22px;top:316.2px;font-size:14px;color:#707070;transform:scaleX(0.94);">5:00</span>
<span class="t" style="left:1234.22px;top:316.2px;font-size:14px;color:#707070;transform:scaleX(0.94);">3:58</span>
<span class="t" style="left:1346.62px;top:316.2px;font-size:14px;color:#707070;transform:scaleX(0.94);">5:53</span>
<span class="t" style="left:1459.12px;top:316.2px;font-size:14px;color:#c8c8c8;transform:scaleX(0.94);">0:00</span>
<span class="t" style="left:1563.4px;top:317.2px;font-size:13.6px;color:#505050;-webkit-text-stroke:0.4px;">21:38</span>
<span class="t" style="left:15.68px;top:344.25px;font-size:13px;color:#1a9a97;transform:scaleX(0.95);">l</span>
<span class="t" style="left:50.9px;top:344.75px;font-size:13.8px;color:#505050;-webkit-text-stroke:0.62px;transform:scaleX(0.9661);">Research &amp; Development</span>
<span class="t" style="left:209.85px;top:344.75px;font-size:13.8px;color:#555;-webkit-text-stroke:0.3px;transform:scaleX(0.8);">/</span>
<span class="t" style="left:220.11px;top:344.75px;font-size:13.8px;color:#505050;-webkit-text-stroke:0.62px;transform:scaleX(0.9857);">Planning and budget</span>
<span class="t" style="left:786.22px;top:343.75px;font-size:14px;color:#c8c8c8;transform:scaleX(0.94);">0:00</span>
<span class="t" style="left:898.22px;top:343.75px;font-size:14px;color:#707070;transform:scaleX(0.94);">2:47</span>
<span class="t" style="left:1010.22px;top:343.75px;font-size:14px;color:#707070;transform:scaleX(0.94);">4:00</span>
<span class="t" style="left:1122.22px;top:343.75px;font-size:14px;color:#707070;transform:scaleX(0.94);">2:59</span>
<span class="t" style="left:1234.22px;top:343.75px;font-size:14px;color:#707070;transform:scaleX(0.94);">2:39</span>
<span class="t" style="left:1346.62px;top:343.75px;font-size:14px;color:#707070;transform:scaleX(0.94);">6:52</span>
<span class="t" style="left:1459.12px;top:343.75px;font-size:14px;color:#c8c8c8;transform:scaleX(0.94);">0:00</span>
<span class="t" style="left:1563.4px;top:344.75px;font-size:13.6px;color:#505050;-webkit-text-stroke:0.4px;">19:18</span>
<span class="t" style="left:11.88px;top:371.8px;font-size:13px;color:#1a9a97;transform:scaleX(0.95);">m</span>
<span class="t" style="left:50.9px;top:372.3px;font-size:13.8px;color:#505050;-webkit-text-stroke:0.62px;transform:scaleX(0.9866);">Office Design</span>
<span class="t" style="left:140.1px;top:372.3px;font-size:13.8px;color:#555;-webkit-text-stroke:0.3px;transform:scaleX(0.7375);">/</span>
<span class="t" style="left:150.6px;top:372.3px;font-size:13.8px;color:#505050;-webkit-text-stroke:0.62px;">Office planning</span>
<span class="t" style="left:786.22px;top:371.3px;font-size:14px;color:#c8c8c8;transform:scaleX(0.94);">0:00</span>
<span class="t" style="left:898.22px;top:371.3px;font-size:14px;color:#707070;transform:scaleX(0.94);">5:00</span>
<span class="t" style="left:1010.22px;top:371.3px;font-size:14px;color:#707070;transform:scaleX(0.94);">2:08</span>
<span class="t" style="left:1122.22px;top:371.3px;font-size:14px;color:#707070;transform:scaleX(0.94);">3:58</span>
<span class="t" style="left:1234.22px;top:371.3px;font-size:14px;color:#707070;transform:scaleX(0.94);">4:41</span>
<span class="t" style="left:1346.62px;top:371.3px;font-size:14px;color:#707070;transform:scaleX(0.94);">2:59</span>
<span class="t" style="left:1459.12px;top:371.3px;font-size:14px;color:#c8c8c8;transform:scaleX(0.94);">0:00</span>
<span class="t" style="left:1563.4px;top:372.3px;font-size:13.6px;color:#505050;-webkit-text-stroke:0.4px;">18:46</span>
<span class="t" style="left:13.3px;top:399.35px;font-size:13px;color:#1a9a97;transform:scaleX(0.95);">n</span>
<span class="t" style="left:50.9px;top:399.85px;font-size:13.8px;color:#505050;-webkit-text-stroke:0.62px;transform:scaleX(0.9866);">Office Design</span>
<span class="t" style="left:140.1px;top:399.85px;font-size:13.8px;color:#555;-webkit-text-stroke:0.3px;transform:scaleX(0.7375);">/</span>
<span class="t" style="left:149.62px;top:399.85px;font-size:13.8px;color:#505050;-webkit-text-stroke:0.62px;transform:scaleX(0.981);">Room 1: Decoration</span>
<span class="t" style="left:786.22px;top:398.85px;font-size:14px;color:#c8c8c8;transform:scaleX(0.94);">0:00</span>
<span class="t" style="left:898.22px;top:398.85px;font-size:14px;color:#707070;transform:scaleX(0.94);">5:30</span>
<span class="t" style="left:1010.22px;top:398.85px;font-size:14px;color:#707070;transform:scaleX(0.94);">0:27</span>
<span class="t" style="left:1122.22px;top:398.85px;font-size:14px;color:#707070;transform:scaleX(0.94);">1:23</span>
<span class="t" style="left:1234.22px;top:398.85px;font-size:14px;color:#707070;transform:scaleX(0.94);">3:53</span>
<span class="t" style="left:1346.62px;top:398.85px;font-size:14px;color:#707070;transform:scaleX(0.94);">5:06</span>
<span class="t" style="left:1459.12px;top:398.85px;font-size:14px;color:#c8c8c8;transform:scaleX(0.94);">0:00</span>
<span class="t" style="left:1563.4px;top:399.85px;font-size:13.6px;color:#505050;-webkit-text-stroke:0.4px;">16:19</span>
<span class="t" style="left:854.24px;top:453.8px;font-size:13px;color:#4a4a4a;-webkit-text-stroke:0.6px;transform:scaleX(1.06);">52:33</span>
<span class="t" style="left:966.24px;top:453.8px;font-size:13px;color:#4a4a4a;-webkit-text-stroke:0.6px;transform:scaleX(1.06);">46:30</span>
<span class="t" style="left:1077.71px;top:453.8px;font-size:13px;color:#4a4a4a;-webkit-text-stroke:0.6px;transform:scaleX(1.06);">51:04</span>
<span class="t" style="left:1190.24px;top:453.8px;font-size:13px;color:#4a4a4a;-webkit-text-stroke:0.6px;transform:scaleX(1.06);">56:46</span>
<span class="t" style="left:1301.71px;top:453.8px;font-size:13px;color:#4a4a4a;-webkit-text-stroke:0.6px;transform:scaleX(1.06);">63:24</span>
<span class="t" style="left:1556.4px;top:453.6px;font-size:13.6px;color:#505050;-webkit-text-stroke:0.4px;">270:17</span>
</main>

</body>
</html>
